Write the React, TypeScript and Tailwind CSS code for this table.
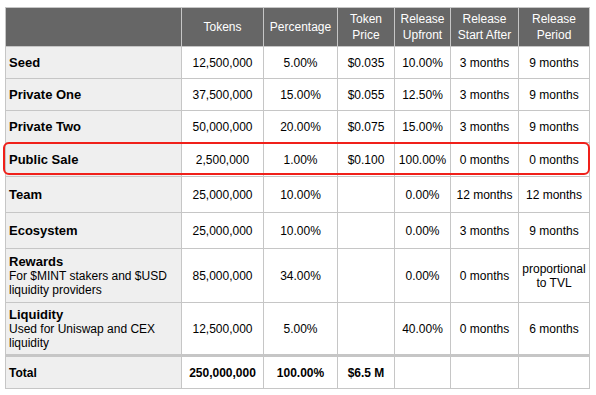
import React from "react";

type Row = {
  label: string;
  note?: string;
  tokens: string;
  pct: string;
  price: string;
  upfront: string;
  startAfter: string;
  period: React.ReactNode;
  h: string;
};

const rows: Row[] = [
  { label: "Seed", tokens: "12,500,000", pct: "5.00%", price: "$0.035", upfront: "10.00%", startAfter: "3 months", period: "9 months", h: "h-[32px]" },
  { label: "Private One", tokens: "37,500,000", pct: "15.00%", price: "$0.055", upfront: "12.50%", startAfter: "3 months", period: "9 months", h: "h-[32px]" },
  { label: "Private Two", tokens: "50,000,000", pct: "20.00%", price: "$0.075", upfront: "15.00%", startAfter: "3 months", period: "9 months", h: "h-[32px]" },
  { label: "Public Sale", tokens: "2,500,000", pct: "1.00%", price: "$0.100", upfront: "100.00%", startAfter: "0 months", period: "0 months", h: "h-[34px]" },
  { label: "Team", tokens: "25,000,000", pct: "10.00%", price: "", upfront: "0.00%", startAfter: "12 months", period: "12 months", h: "h-[36px]" },
  { label: "Ecosystem", tokens: "25,000,000", pct: "10.00%", price: "", upfront: "0.00%", startAfter: "3 months", period: "9 months", h: "h-[36px]" },
  {
    label: "Rewards",
    note: "For $MINT stakers and $USD liquidity providers",
    tokens: "85,000,000",
    pct: "34.00%",
    price: "",
    upfront: "0.00%",
    startAfter: "0 months",
    period: <>proportional<br />to TVL</>,
    h: "h-[54px]",
  },
  {
    label: "Liquidity",
    note: "Used for Uniswap and CEX liquidity",
    tokens: "12,500,000",
    pct: "5.00%",
    price: "",
    upfront: "40.00%",
    startAfter: "0 months",
    period: "6 months",
    h: "h-[53px]",
  },
];

const headers: React.ReactNode[] = [
  "Tokens",
  "Percentage",
  <>Token<br />Price</>,
  <>Release<br />Upfront</>,
  <>Release<br />Start After</>,
  <>Release<br />Period</>,
];

const cell = "border border-[#c6c6c6] text-center align-middle text-[12px] leading-[14px] p-0";

export default function App() {
  return (
    <div className="w-[596px] h-[395px] bg-white pl-[5px] pt-[7px] font-['Liberation_Sans',Arial,sans-serif] text-black">
      <div className="relative w-[584px]">
        <table className="w-[584px] table-fixed border-collapse">
          <colgroup>
            <col className="w-[176px]" />
            <col className="w-[82px]" />
            <col className="w-[74px]" />
            <col className="w-[57px]" />
            <col className="w-[56px]" />
            <col className="w-[68px]" />
            <col className="w-[71px]" />
          </colgroup>
          <thead>
            <tr className="h-[39px] bg-[#666666] text-white">
              <th className="border border-[#c6c6c6] p-0" />
              {headers.map((h, i) => (
                <th key={i} className="border border-[#c6c6c6] p-0 text-center align-middle text-[12px] font-normal leading-[16px]">
                  {h}
                </th>
              ))}
            </tr>
          </thead>
          <tbody>
            {rows.map(r => (
              <tr key={r.label} className={r.h}>
                <td className="border border-[#c6c6c6] bg-[#efefef] px-[3px] py-0 text-left align-middle">
                  <div className="text-[13px] font-bold leading-[15px]">{r.label}</div>
                  {r.note && <div className="text-[12px] leading-[14px]">{r.note}</div>}
                </td>
                <td className={cell}>{r.tokens}</td>
                <td className={cell}>{r.pct}</td>
                <td className={cell}>{r.price}</td>
                <td className={cell}>{r.upfront}</td>
                <td className={cell}>{r.startAfter}</td>
                <td className={cell}>{r.period}</td>
              </tr>
            ))}
            <tr className="h-[33px] font-bold">
              <td className="border border-[#c6c6c6] border-t-[3px] bg-[#efefef] px-[3px] py-0 text-left align-middle text-[12px]">Total</td>
              <td className={`${cell} border-t-[3px]`}>250,000,000</td>
              <td className={`${cell} border-t-[3px]`}>100.00%</td>
              <td className={`${cell} border-t-[3px]`}>$6.5 M</td>
              <td className={`${cell} border-t-[3px]`} />
              <td className={`${cell} border-t-[3px]`} />
              <td className={`${cell} border-t-[3px]`} />
            </tr>
          </tbody>
        </table>
        <div className="pointer-events-none absolute left-[-2px] top-[135px] h-[33px] w-[587px] rounded-[6px] border-2 border-[#f0201a]" />
      </div>
    </div>
  );
}
